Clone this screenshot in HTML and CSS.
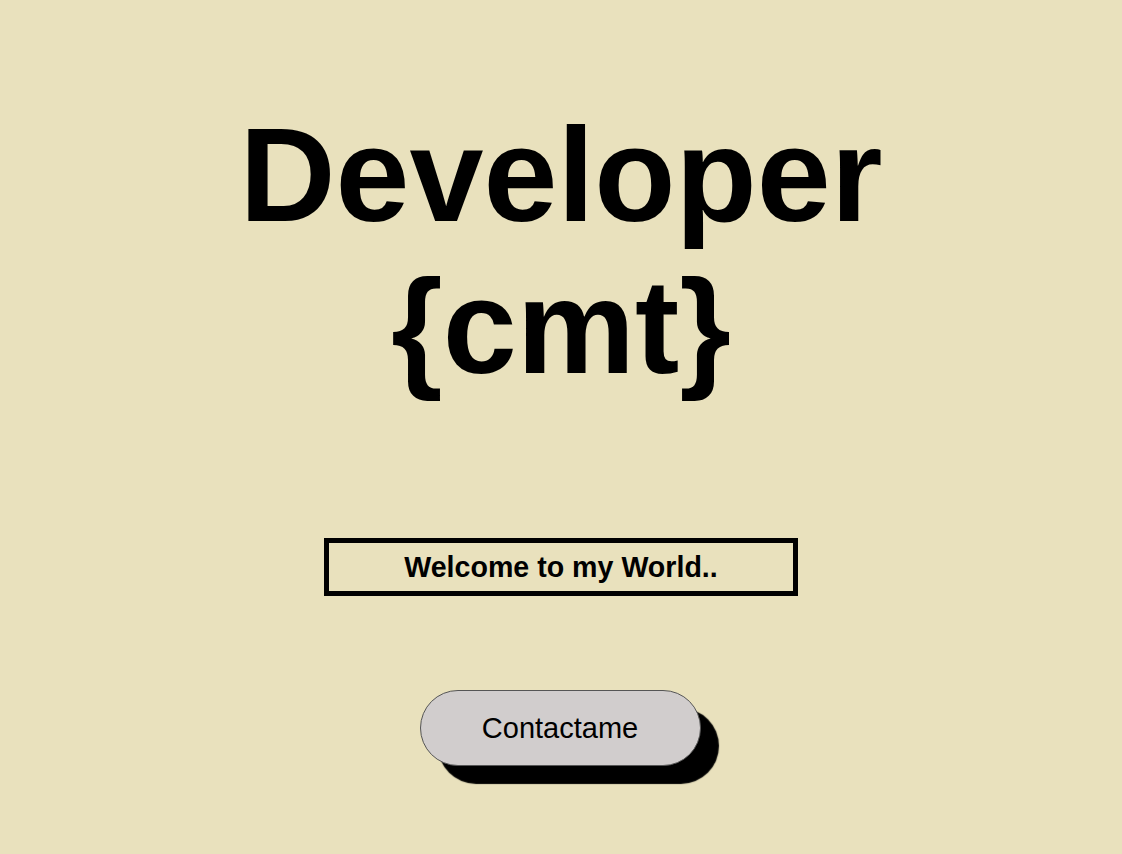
FILE: index.html
```html
<!DOCTYPE html>
<html lang="es">
<head>
<meta charset="utf-8">
<title>Developer {cmt}</title>
<link rel="stylesheet" href="styles.css">
</head>
<body>
<main class="hero">
  <h1 class="title">Developer<br>{cmt}</h1>
  <div class="welcome">Welcome to my World..</div>
  <button class="contact">Contactame</button>
</main>
</body>
</html>
```
FILE: styles.css
```css
html, body {
  margin: 0;
  padding: 0;
}
body {
  background: #e9e1bd;
  font-family: "Liberation Sans", Arial, sans-serif;
  color: #000;
  min-height: 854px;
}
.hero {
  display: flex;
  flex-direction: column;
  align-items: center;
  padding-top: 99px;
}
.title {
  margin: 0;
  font-size: 133px;
  font-weight: 700;
  line-height: normal;
  text-align: center;
}
.welcome {
  margin-top: 135px;
  box-sizing: border-box;
  width: 474px;
  height: 58px;
  border: 5px solid #000;
  font-size: 28.6px;
  font-weight: 700;
  display: flex;
  align-items: center;
  justify-content: center;
}
.contact {
  margin-top: 94px;
  width: 281px;
  height: 76px;
  border: 1.5px solid #555;
  border-radius: 38px;
  background: #d1cdcd;
  font-family: "Liberation Sans", Arial, sans-serif;
  font-size: 29px;
  color: #000;
  box-shadow: 18px 18px 1px #000;
  margin-left: -2px;
}
```
